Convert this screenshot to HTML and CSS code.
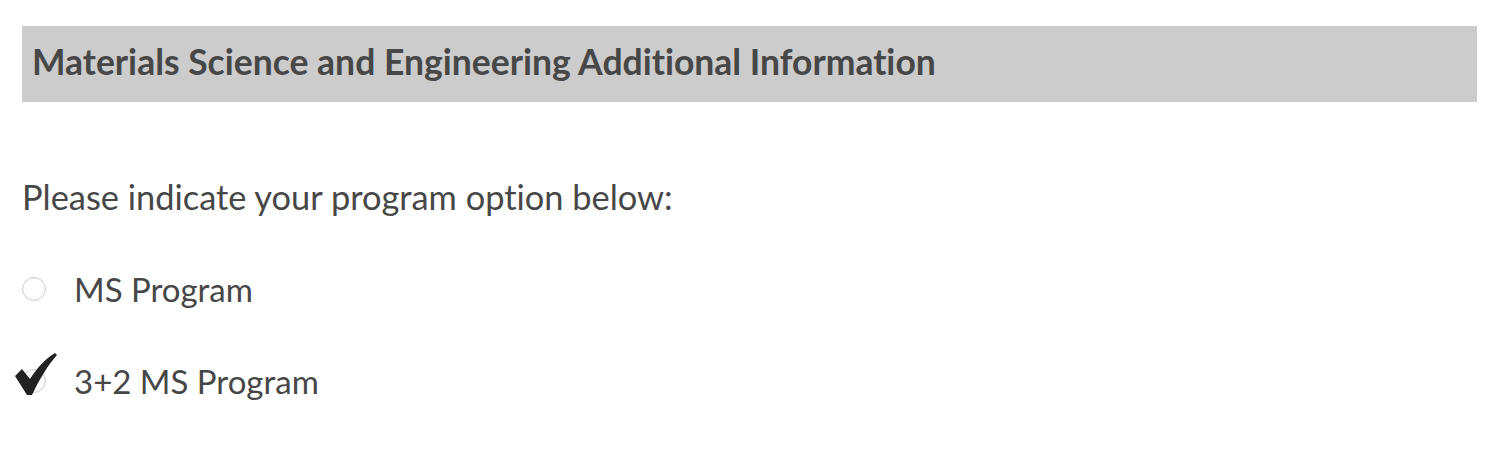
FILE: index.html
```html
<!DOCTYPE html>
<html lang="en">
<head>
<meta charset="utf-8">
<title>Materials Science and Engineering Additional Information</title>
<link rel="stylesheet" href="styles.css">
</head>
<body>
<section class="panel">
  <h2 class="panel-title">Materials Science and Engineering Additional Information</h2>
  <p class="question">Please indicate your program option below:</p>
  <div class="options">
    <label class="option">
      <span class="radio"></span>
      <span class="option-text">MS Program</span>
    </label>
    <label class="option">
      <span class="radio">
        <svg class="check" viewBox="0 0 44 45" width="44" height="45" aria-hidden="true">
          <path d="M1 24 L8 17 L16 27 C23 16 31 7 41 1 L43 3 C34 13 25 28 18 43 L13 43 Z" fill="#222"/>
        </svg>
      </span>
      <span class="option-text">3+2 MS Program</span>
    </label>
  </div>
</section>
</body>
</html>
```

FILE: styles.css
```css
html, body {
  margin: 0;
  padding: 0;
  background: #fff;
}
body {
  padding: 26px 21px 0 22px;
  font-family: Lato, "Open Sans", sans-serif;
  font-variant-ligatures: none;
  color: #474747;
}
.panel-title {
  margin: 0;
  background: #cccccc;
  height: 76px;
  box-sizing: border-box;
  display: flex;
  align-items: center;
  padding: 0 10px 6px;
  font-size: 35.5px;
  font-weight: 700;
  color: #474747;
}
.question {
  margin: 0;
  padding-top: 75px;
  font-size: 34.4px;
  line-height: 40px;
}
.options {
  display: flex;
  flex-direction: column;
  gap: 52px;
  margin-top: 52px;
}
.option {
  display: flex;
  align-items: center;
  gap: 28px;
  font-size: 33px;
  line-height: 40px;
}
.radio {
  position: relative;
  width: 22px;
  height: 22px;
  border-radius: 50%;
  border: 1px solid #cfcfcf;
  background: radial-gradient(circle at 50% 40%, #ffffff 55%, #ececec 100%);
  box-shadow: inset 0 1px 1px rgba(0,0,0,0.06);
  flex: none;
}
.check {
  position: absolute;
  left: -9px;
  top: -18px;
}
```
